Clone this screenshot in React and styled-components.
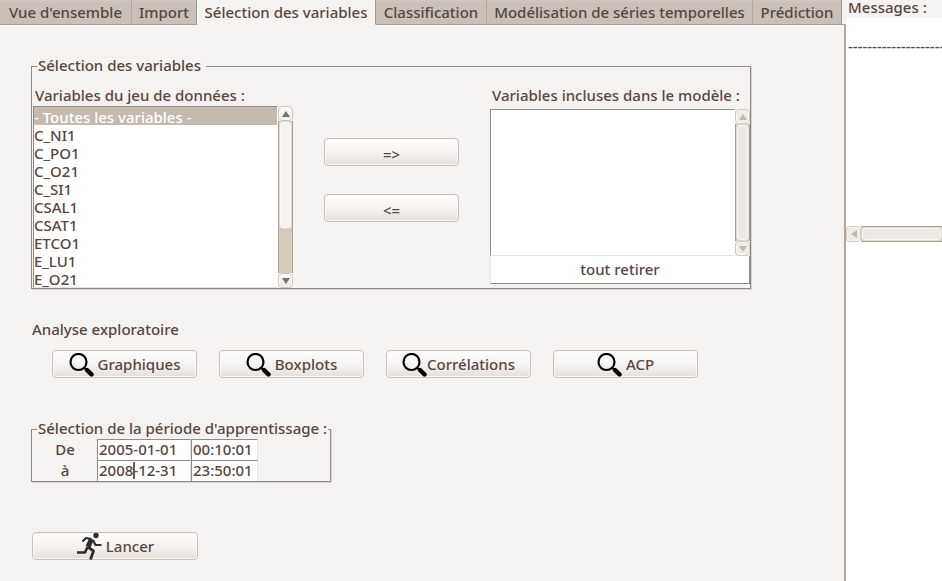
import React, { useState } from 'react'
import styled, { createGlobalStyle } from 'styled-components'

const GlobalStyle = createGlobalStyle`
    * {
        box-sizing: border-box;
    }

    body {
        margin: 0;
        background: #f5f3f1;
        color: #57473f;
        font-family: 'Noto Sans', 'Open Sans', sans-serif;
        font-size: 15px;
        font-weight: 500;
        line-height: 18px;
    }

    button, input, select {
        font: inherit;
        color: inherit;
        margin: 0;
    }
`

const Window = styled.div`
    display: grid;
    grid-template-columns: minmax(0, 1fr) 96px;
    min-height: 100vh;
    overflow: hidden;
`

const Main = styled.main`
    display: flex;
    flex-direction: column;
`

const Tabs = styled.div`
    display: flex;
    height: 25px;
`

const Tab = styled.button`
    flex: 0 0 auto;
    width: ${({ $width }) => $width}px;
    padding: 0 0 1px;
    border: 0;
    border-right: 1px solid ${({ $edge }) => ($edge ? '#a69888' : '#b3a89e')};
    border-bottom: 1px solid ${({ $active }) => ($active ? '#f5f3f1' : '#ac9e94')};
    background: ${({ $active }) => ($active ? '#f5f3f1' : 'linear-gradient(#d0c8c0, #c8c0b9 4px)')};
    white-space: nowrap;
`

const TabsEnd = styled.div`
    flex: 1;
    border-bottom: 1px solid #b8aa9c;
`

const Page = styled.div`
    flex: 1;
    padding: 31px 31px 20px;
    border-right: 2px solid #b4a79a;
`

const Group = styled.fieldset`
    width: fit-content;
    min-width: ${({ $minWidth }) => $minWidth || 0}px;
    margin: 0 0 ${({ $space }) => $space}px;
    padding: 0 0 0 1px;
    border: 1px solid #8e8c8a;
    box-shadow: 1px 1px #d5d2cf;
`

const Legend = styled.legend`
    margin-left: 4px;
    padding: 0 ${({ $end }) => $end}px 2px 1px;
    white-space: nowrap;
`

const Columns = styled.div`
    display: flex;
    align-items: flex-start;
    gap: 31px;
    padding-top: 10px;
`

const Column = styled.div`
    display: flex;
    flex-direction: column;
    width: 260px;
`

const Label = styled.label`
    padding: 0 0 2px 2px;
    margin-bottom: ${({ $space }) => $space || 0}px;
    white-space: nowrap;
`

const ListRow = styled.div`
    display: flex;
    height: ${({ $height }) => $height}px;
`

const List = styled.select`
    flex: 1;
    min-width: 0;
    padding: 0;
    border: 1px solid #8e8c8a;
    border-color: #8e8c8a #fff #e6e4e2 #8e8c8a;
    border-radius: 0;
    background: #fff;
    outline: 0;
    overflow: hidden;
`

const Item = styled.option`
    height: 18px;
    min-height: 18px;
    padding: 0;
    font-weight: 500;
    line-height: 15px;

    &:checked {
        background: linear-gradient(#c4baaf, #c4baaf);
        color: #fff;
    }
`

const Scroll = styled.div`
    display: flex;
    flex: none;
    flex-direction: ${({ $across }) => ($across ? 'row' : 'column')};
    ${({ $across }) => ($across ? 'height: 16px;' : 'width: 15px;')}
`

const ScrollButton = styled.button`
    display: flex;
    flex: 0 0 15px;
    align-items: center;
    justify-content: center;
    padding: 0;
    border: 1px solid #cfc7be;
    border-radius: 4px;
    background: linear-gradient(#fbfaf9, #ece8e4);
    box-shadow: inset 0 0 0 1px #f9f8f7;
    color: #77726d;

    &:disabled {
        background: #efece8;
        color: #c2b8ae;
    }
`

const Track = styled.div`
    display: flex;
    flex: 1;
    flex-direction: column;
    border: solid #b0a293;
    border-width: ${({ $across }) => ($across ? '1px 0' : '0 1px')};
    background: #d6cabd;
`

const Thumb = styled.div`
    flex: 0 0 ${({ $size }) => $size};
    border: 1px solid #dfd8d1;
    border-radius: 4px;
    background: ${({ $disabled }) => ($disabled ? '#ece8e4' : '#f5f3f1')};
    box-shadow: inset 0 0 0 1px #faf8f7;
`

const Button = styled.button`
    display: flex;
    align-items: center;
    justify-content: center;
    gap: ${({ $gap }) => $gap || 0}px;
    width: ${({ $width }) => ($width ? `${$width}px` : '100%')};
    height: 28px;
    padding: 0;
    border: 1px solid #cbc0b7;
    border-radius: 4px;
    background: linear-gradient(#fff, #f4f2f1 55%, #e4dfda);
    box-shadow: inset 0 0 0 1px #fbf9f7;
    white-space: nowrap;
`

const Arrows = styled.div`
    display: flex;
    flex-direction: column;
    gap: 28px;
    width: 135px;
    padding-top: 52px;

    ${Button} {
        padding-top: 3px;
    }
`

const RemoveAll = styled.button`
    height: 28px;
    padding: 0 0 2px;
    border: 1px solid #e6e4e2;
    border-right-color: #8e8c8a;
    border-bottom-color: #8e8c8a;
    border-top: 0;
    background: #fff;
`

const Heading = styled.h2`
    margin: 0 0 12px 1px;
    font: inherit;
`

const Tools = styled.div`
    display: flex;
    gap: 22px;
    margin: 0 0 41px 21px;

    svg {
        margin-top: 2px;
    }
`

const Period = styled.div`
    display: grid;
    grid-template-columns: 64px 94px 67px;
    grid-auto-rows: 21px;
`

const PeriodLabel = styled.label`
    text-align: center;
    line-height: 20px;
`

const Cell = styled.div`
    position: relative;
    display: flex;
`

const DateInput = styled.input`
    width: 100%;
    padding: 0 1px 2px;
    border: 1px solid #8e8c8a;
    border-right-color: #e6e4e2;
    border-bottom: 0;
    border-radius: 0;
    background: #fff;
    outline: 0;
`

const Caret = styled.span`
    position: absolute;
    top: 2px;
    left: 36px;
    width: 2px;
    height: 17px;
    background: #685850;
`

const Launch = styled.div`
    padding-left: 1px;
`

const Side = styled.aside`
    display: flex;
    flex-direction: column;
    min-width: 0;
    background: #fff;
`

const SideTitle = styled.h2`
    height: 18px;
    margin: 0;
    padding-left: 2px;
    background: #f5f3f1;
    font: inherit;
    line-height: 14px;
    white-space: nowrap;
`

const Log = styled.div`
    height: 208px;
    padding: 19px 0 0 2px;
    overflow: hidden;
    white-space: nowrap;
`

const tabs = [
  { name: "Vue d'ensemble", width: 132 },
  { name: 'Import', width: 65, edge: true },
  { name: 'Sélection des variables', width: 179, edge: true },
  { name: 'Classification', width: 111 },
  { name: 'Modélisation de séries temporelles', width: 266 },
  { name: 'Prédiction', width: 89, edge: true },
]

const variables = [
  '- Toutes les variables -', 'C_NI1', 'C_PO1', 'C_O21', 'C_SI1',
  'CSAL1', 'CSAT1', 'ETCO1', 'E_LU1', 'E_O21',
]

const tools = [
  { name: 'Graphiques', gap: 4 },
  { name: 'Boxplots', gap: 4 },
  { name: 'Corrélations', gap: 0 },
  { name: 'ACP', gap: 4 },
]

const arrowPoints = {
  up: '4,0 8,6 0,6',
  down: '0,0 8,0 4,6',
  left: '6,0 6,8 0,4',
}

const Arrow = ({ to }) => (
  <svg width={to === 'left' ? 6 : 8} height={to === 'left' ? 8 : 6} aria-hidden="true">
    <polygon points={arrowPoints[to]} fill="currentColor" />
  </svg>
)

const Magnifier = () => (
  <svg width="25" height="24" viewBox="0 0 25 24" fill="none" stroke="#000" aria-hidden="true">
    <circle cx="9.5" cy="9" r="8" strokeWidth="2.2" />
    <path d="M15 14.5l3 3" strokeWidth="2" />
    <path d="M18 17l4.5 4.5" strokeWidth="4.4" strokeLinecap="round" />
  </svg>
)

const Runner = () => (
  <svg width="26" height="28" viewBox="0 0 26 28" fill="none" stroke="#2e2e2e" strokeLinejoin="round" aria-hidden="true">
    <circle cx="20" cy="3.5" r="2.7" fill="#2e2e2e" stroke="none" />
    <path d="M6.500 9.500L10 6L15.500 7" strokeWidth="2.200" />
    <path d="M15.500 7L12 15" strokeWidth="5" />
    <path d="M17 8L19.500 13L25.500 13" strokeWidth="2.200" />
    <path d="M11.500 15L9 20.500L1 20.500" strokeWidth="2.600" />
    <path d="M12 15L17.500 19L14.500 27.500" strokeWidth="2.800" />
  </svg>
)

const VerticalScroll = ({ size, disabled }) => (
  <Scroll>
    <ScrollButton disabled={disabled} aria-label="Monter"><Arrow to="up" /></ScrollButton>
    <Track><Thumb $size={size} $disabled={disabled} /></Track>
    <ScrollButton disabled={disabled} aria-label="Descendre"><Arrow to="down" /></ScrollButton>
  </Scroll>
)

const App = () => {
  const [active, setActive] = useState('Sélection des variables')

  return (
    <Window>
      <GlobalStyle />
      <Main>
        <Tabs role="tablist">
          {tabs.map((tab) => (
            <Tab
              key={tab.name}
              role="tab"
              aria-selected={tab.name === active}
              $active={tab.name === active}
              $width={tab.width}
              $edge={tab.edge}
              onClick={() => setActive(tab.name)}
            >
              {tab.name}
            </Tab>
          ))}
          <TabsEnd />
        </Tabs>
        <Page>
          <Group $space={31}>
            <Legend $end={5}>Sélection des variables</Legend>
            <Columns>
              <Column>
                <Label htmlFor="available">Variables du jeu de données :</Label>
                <ListRow $height={182}>
                  <List id="available" size={10} defaultValue={variables[0]}>
                    {variables.map((name) => <Item key={name} value={name}>{name}</Item>)}
                  </List>
                  <VerticalScroll size="71%" />
                </ListRow>
              </Column>
              <Arrows>
                <Button>=&gt;</Button>
                <Button>&lt;=</Button>
              </Arrows>
              <Column>
                <Label htmlFor="included" $space={3}>Variables incluses dans le modèle :</Label>
                <ListRow $height={147}>
                  <List id="included" size={8} />
                  <VerticalScroll size="100%" disabled />
                </ListRow>
                <RemoveAll>tout retirer</RemoveAll>
              </Column>
            </Columns>
          </Group>

          <Heading>Analyse exploratoire</Heading>
          <Tools>
            {tools.map((tool) => (
              <Button key={tool.name} $width={145} $gap={tool.gap}>
                <Magnifier />
                {tool.name}
              </Button>
            ))}
          </Tools>

          <Group $space={50} $minWidth={300}>
            <Legend $end={1}>Sélection de la période d'apprentissage :</Legend>
            <Period>
              <PeriodLabel htmlFor="from">De</PeriodLabel>
              <Cell><DateInput id="from" defaultValue="2005-01-01" /></Cell>
              <Cell><DateInput aria-label="Heure de début" defaultValue="00:10:01" /></Cell>
              <PeriodLabel htmlFor="to">à</PeriodLabel>
              <Cell>
                <DateInput id="to" defaultValue="2008-12-31" />
                <Caret />
              </Cell>
              <Cell><DateInput aria-label="Heure de fin" defaultValue="23:50:01" /></Cell>
            </Period>
          </Group>

          <Launch>
            <Button $width={166} $gap={4}>
              <Runner />
              Lancer
            </Button>
          </Launch>
        </Page>
      </Main>
      <Side>
        <SideTitle>Messages :</SideTitle>
        <Log>{'-'.repeat(60)}</Log>
        <Scroll $across>
          <ScrollButton disabled aria-label="Gauche"><Arrow to="left" /></ScrollButton>
          <Track $across><Thumb $size="100%" $disabled /></Track>
        </Scroll>
      </Side>
    </Window>
  )
}

export default App
